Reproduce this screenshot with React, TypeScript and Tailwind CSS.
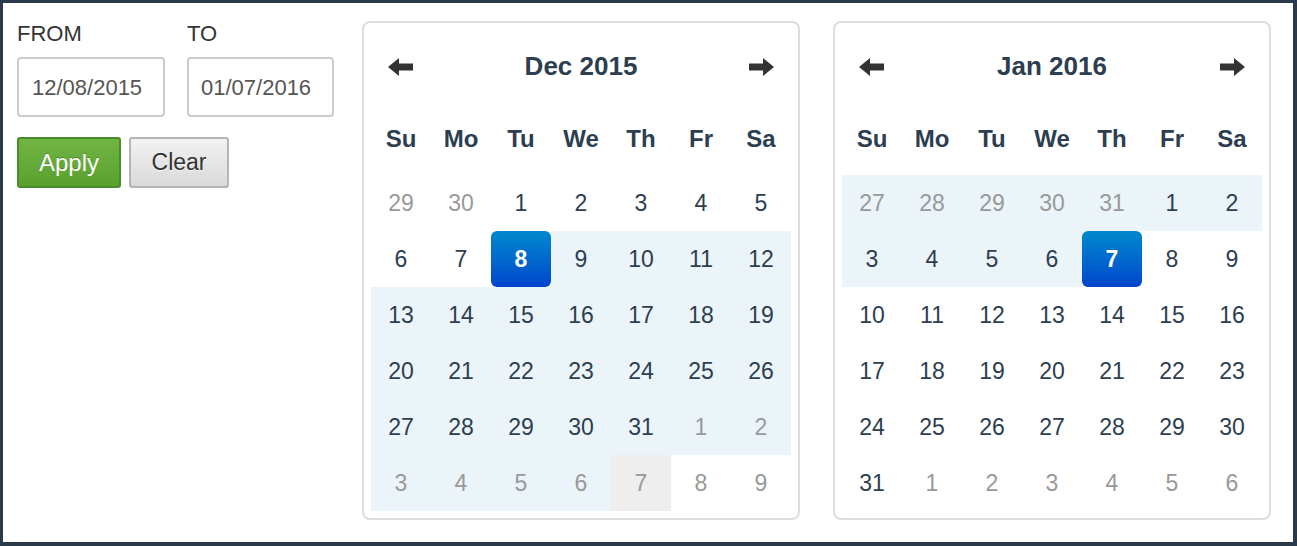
import React from "react";

type Cell = { d: number; off?: boolean; range?: boolean; active?: boolean; gray?: boolean };

const DOW = ["Su", "Mo", "Tu", "We", "Th", "Fr", "Sa"];

function mk(nums: number[], opts: (i: number, n: number) => Partial<Cell>): Cell[] {
  return nums.map((d, i) => ({ d, ...opts(i, d) }));
}

const decRows: Cell[][] = [
  mk([29, 30, 1, 2, 3, 4, 5], (i) => ({ off: i < 2 })),
  mk([6, 7, 8, 9, 10, 11, 12], (i) => ({ active: i === 2, range: i > 2 })),
  mk([13, 14, 15, 16, 17, 18, 19], () => ({ range: true })),
  mk([20, 21, 22, 23, 24, 25, 26], () => ({ range: true })),
  mk([27, 28, 29, 30, 31, 1, 2], (i) => ({ range: true, off: i > 4 })),
  mk([3, 4, 5, 6, 7, 8, 9], (i) => ({ off: true, range: i < 4, gray: i === 4 })),
];

const janRows: Cell[][] = [
  mk([27, 28, 29, 30, 31, 1, 2], (i) => ({ range: true, off: i < 5 })),
  mk([3, 4, 5, 6, 7, 8, 9], (i) => ({ range: i < 4, active: i === 4 })),
  mk([10, 11, 12, 13, 14, 15, 16], () => ({})),
  mk([17, 18, 19, 20, 21, 22, 23], () => ({})),
  mk([24, 25, 26, 27, 28, 29, 30], () => ({})),
  mk([31, 1, 2, 3, 4, 5, 6], (i) => ({ off: i > 0 })),
];

function Arrow({ dir }: { dir: "left" | "right" }) {
  return (
    <svg width="26" height="20" viewBox="0 0 26 20" className={dir === "right" ? "-scale-x-100" : ""}>
      <polygon points="0,10 11,1 11,6.5 25,6.5 25,13.5 11,13.5 11,19" fill="#333" />
    </svg>
  );
}

function Calendar({ title, rows }: { title: string; rows: Cell[][] }) {
  return (
    <div className="w-[438px] h-[499px] border-2 border-[#dddddd] rounded-[8px] bg-white p-[7px]">
      <div className="h-[73px] flex items-center">
        <div className="w-[60px] flex justify-center">
          <Arrow dir="left" />
        </div>
        <div className="flex-1 text-center font-bold text-[26px] text-[#2c3e50]">{title}</div>
        <div className="w-[60px] flex justify-center">
          <Arrow dir="right" />
        </div>
      </div>
      <div className="h-[72px] grid grid-cols-7 items-center">
        {DOW.map((d) => (
          <div key={d} className="text-center font-bold text-[24px] text-[#2c3e50]">
            {d}
          </div>
        ))}
      </div>
      {rows.map((row, ri) => (
        <div key={ri} className="grid grid-cols-7">
          {row.map((c, ci) => {
            let cls = "h-[56px] flex items-center justify-center text-[23px] ";
            if (c.active) {
              cls += "rounded-[6px] bg-gradient-to-b from-[#0088cc] to-[#0044cc] text-white font-bold";
            } else if (c.gray) {
              cls += "bg-[#eeeeee] text-[#999999]";
            } else {
              cls += c.range ? "bg-[#ebf4f8] " : "";
              cls += c.off ? "text-[#999999]" : "text-[#2c3e50]";
            }
            return (
              <div key={ci} className={cls}>
                {c.d}
              </div>
            );
          })}
        </div>
      ))}
    </div>
  );
}

export default function App() {
  return (
    <div
      className="w-[1297px] h-[546px] bg-white border-solid border-[#2b3a4a] border-t-[3px] border-l-[3px] border-r-[4px] border-b-[4px] flex pl-[14px] pt-[18px]"
      style={{ fontFamily: '"Liberation Sans", Arial, Helvetica, sans-serif' }}
    >
      <div className="w-[317px] flex flex-col">
        <div className="flex">
          <div className="w-[148px] mr-[22px]">
            <div className="text-[22px] leading-[24px] text-[#333] pt-[1px]">FROM</div>
            <div className="mt-[11px] h-[60px] w-[148px] border-2 border-[#cccccc] rounded-[4px] flex items-center pl-[13px] text-[22px] text-[#555]">
              12/08/2015
            </div>
          </div>
          <div className="w-[147px]">
            <div className="text-[22px] leading-[24px] text-[#333] pt-[1px]">TO</div>
            <div className="mt-[11px] h-[60px] w-[147px] border-2 border-[#cccccc] rounded-[4px] flex items-center pl-[12px] text-[22px] text-[#555]">
              01/07/2016
            </div>
          </div>
        </div>
        <div className="flex mt-[20px] gap-[8px]">
          <div className="w-[104px] h-[51px] rounded-[3px] border-2 border-[#4c8b2b] bg-gradient-to-b from-[#70b544] to-[#5aa02f] flex items-center justify-center text-white text-[24px] [text-shadow:0_-1px_0_rgba(0,0,0,0.25)]">
            Apply
          </div>
          <div className="w-[100px] h-[51px] rounded-[3px] border-2 border-[#b5b5b5] bg-gradient-to-b from-[#f2f2f2] to-[#d9d9d9] flex items-center justify-center text-[#333] text-[23px] [text-shadow:0_1px_0_rgba(255,255,255,0.75)]">
            Clear
          </div>
        </div>
      </div>
      <div className="ml-[28px]">
        <Calendar title="Dec 2015" rows={decRows} />
      </div>
      <div className="ml-[33px]">
        <Calendar title="Jan 2016" rows={janRows} />
      </div>
    </div>
  );
}
